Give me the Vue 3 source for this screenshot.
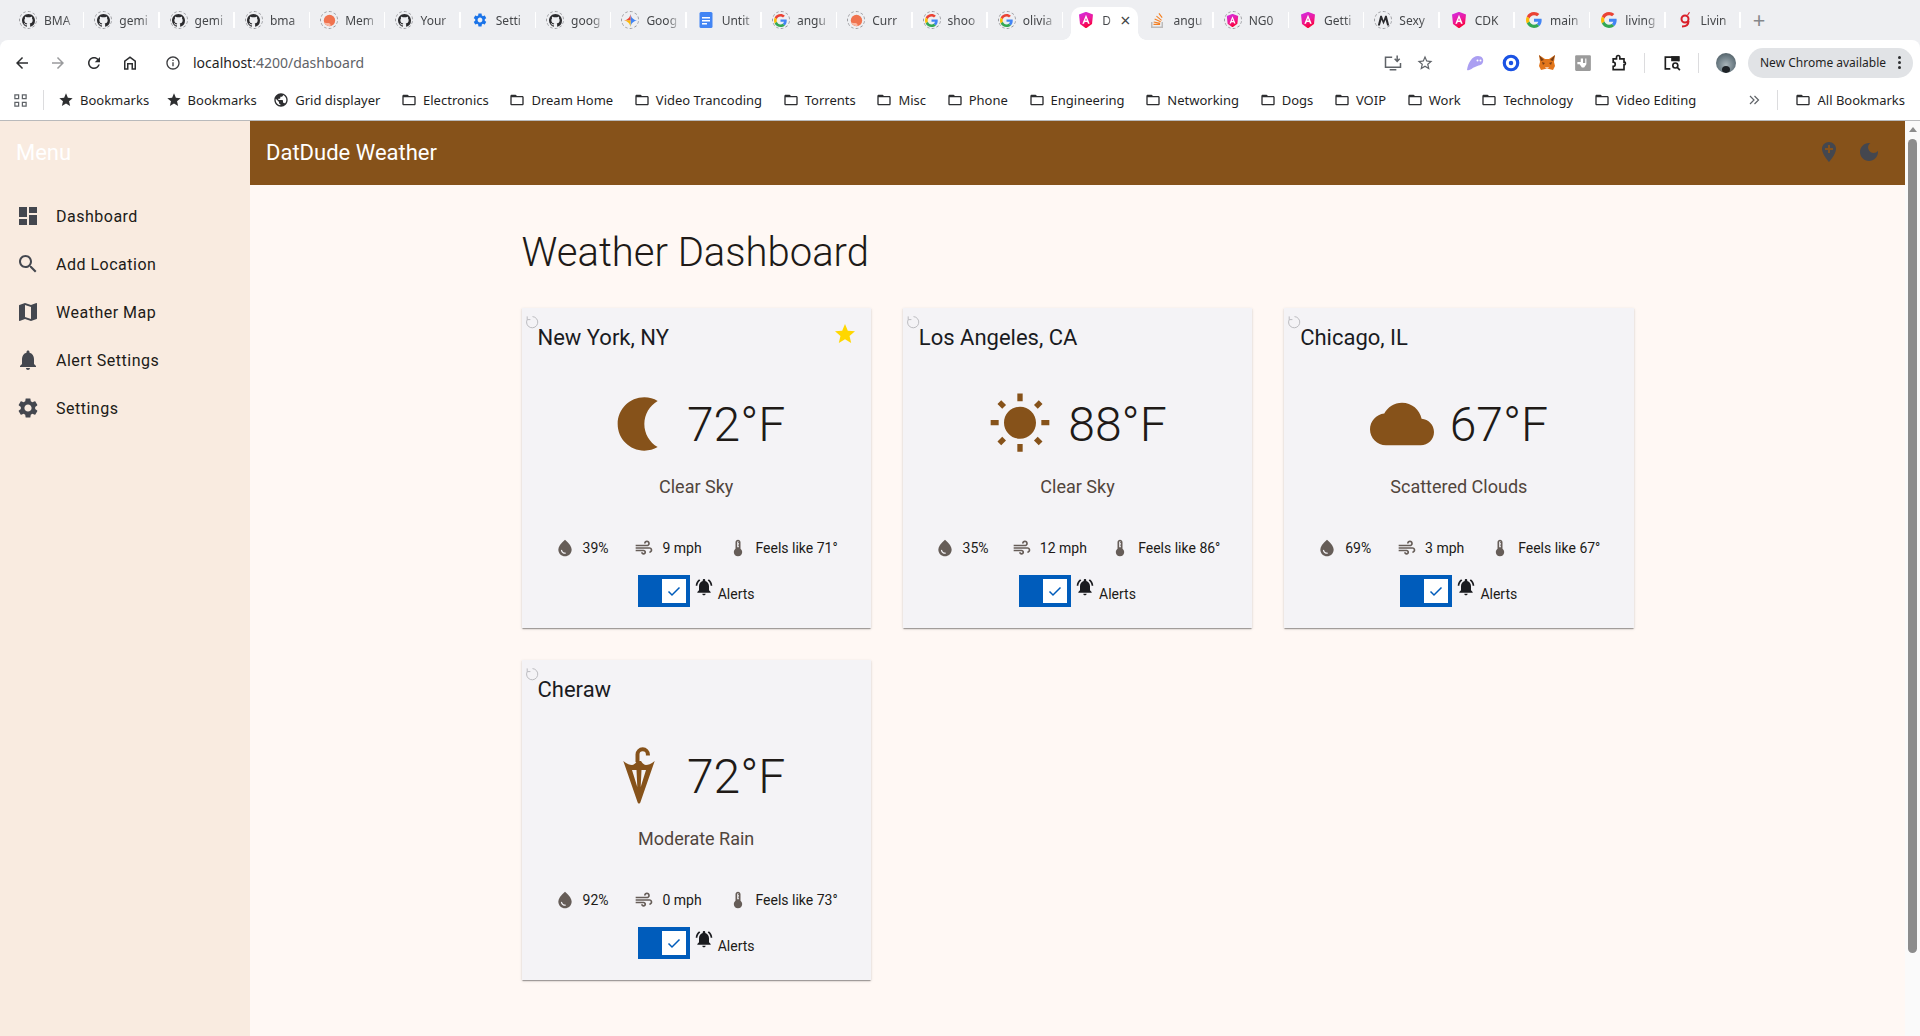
<script setup>
const icons = {
  dashboard: 'M3 13h8V3H3v10zm0 8h8v-6H3v6zm10 0h8V11h-8v10zm0-18v6h8V3h-8z',
  search: 'M15.5 14h-.79l-.28-.27C15.41 12.59 16 11.11 16 9.5 16 5.91 13.09 3 9.5 3S3 5.91 3 9.5 5.91 16 9.5 16c1.61 0 3.09-.59 4.23-1.57l.27.28v.79l5 4.99L20.49 19l-4.99-5zm-6 0C7.01 14 5 11.99 5 9.5S7.01 5 9.5 5 14 7.01 14 9.5 11.99 14 9.5 14z',
  map: 'M20.5 3l-.16.03L15 5.1 9 3 3.36 4.9c-.21.07-.36.25-.36.48V20.5c0 .28.22.5.5.5l.16-.03L9 18.9l6 2.1 5.64-1.9c.21-.07.36-.25.36-.48V3.5c0-.28-.22-.5-.5-.5zM15 19l-6-2.11V5l6 2.11V19z',
  bell: 'M12 22c1.1 0 2-.9 2-2h-4c0 1.1.89 2 2 2zm6-6v-5c0-3.07-1.64-5.64-4.5-6.32V4c0-.83-.67-1.5-1.5-1.5s-1.5.67-1.5 1.5v.68C7.63 5.36 6 7.92 6 11v5l-2 2v1h16v-1l-2-2z',
  settings: 'M19.14 12.94c.04-.3.06-.61.06-.94 0-.32-.02-.64-.07-.94l2.03-1.58c.18-.14.23-.41.12-.61l-1.92-3.32c-.12-.22-.37-.29-.59-.22l-2.39.96c-.5-.38-1.03-.7-1.62-.94l-.36-2.54c-.04-.24-.24-.41-.48-.41h-3.84c-.24 0-.43.17-.47.41l-.36 2.54c-.59.24-1.13.57-1.62.94l-2.39-.96c-.22-.08-.47 0-.59.22L2.74 8.87c-.12.21-.08.47.12.61l2.03 1.58c-.05.3-.09.63-.09.94s.02.64.07.94l-2.03 1.58c-.18.14-.23.41-.12.61l1.92 3.32c.12.22.37.29.59.22l2.39-.96c.5.38 1.03.7 1.62.94l.36 2.54c.05.24.24.41.48.41h3.84c.24 0 .44-.17.47-.41l.36-2.54c.59-.24 1.13-.56 1.62-.94l2.39.96c.22.08.47 0 .59-.22l1.92-3.32c.12-.22.07-.47-.12-.61l-2.01-1.58zM12 15.6c-1.98 0-3.6-1.62-3.6-3.6s1.62-3.6 3.6-3.6 3.6 1.62 3.6 3.6-1.62 3.6-3.6 3.6z',
  addLocation: 'M12 2C8.14 2 5 5.14 5 9c0 5.25 7 13 7 13s7-7.75 7-13c0-3.86-3.14-7-7-7zm4 8h-3v3h-2v-3H8V8h3V5h2v3h3v2z',
  darkMode: 'M12 3c-4.97 0-9 4.03-9 9s4.03 9 9 9 9-4.03 9-9c0-.46-.04-.92-.1-1.36-.98 1.37-2.58 2.26-4.4 2.26-2.98 0-5.4-2.42-5.4-5.4 0-1.81.89-3.42 2.26-4.4-.44-.06-.9-.1-1.36-.1z',
  sun: 'M6.76 4.84l-1.8-1.79-1.41 1.41 1.79 1.79 1.42-1.41zM4 10.5H1v2h3v-2zm9-9.95h-2V3.5h2V.55zm7.45 3.91l-1.41-1.41-1.79 1.79 1.41 1.41 1.79-1.79zm-3.21 13.7l1.79 1.8 1.41-1.41-1.8-1.79-1.4 1.4zM20 10.5v2h3v-2h-3zm-8-5c-3.31 0-6 2.69-6 6s2.69 6 6 6 6-2.69 6-6-2.69-6-6-6zm-1 16.95h2V19.5h-2v2.95zm-7.45-3.91l1.41 1.41 1.79-1.8-1.41-1.41-1.79 1.8z',
  cloud: 'M19.35 10.04C18.67 6.59 15.64 4 12 4 9.11 4 6.6 5.64 5.35 8.04 2.34 8.36 0 10.91 0 14c0 3.31 2.69 6 6 6h13c2.76 0 5-2.24 5-5 0-2.64-2.05-4.78-4.65-4.96z',
  moon: 'M14 2c1.82 0 3.53.5 5 1.35C16.01 5.08 14 8.3 14 12s2.01 6.92 5 8.65C17.53 21.5 15.82 22 14 22 8.48 22 4 17.52 4 12S8.48 2 14 2z',
  drop: 'M12 2c-5.33 4.55-8 8.48-8 11.8 0 4.98 3.8 8.2 8 8.2s8-3.22 8-8.2c0-3.32-2.67-7.25-8-11.8zM7.83 14c.37 0 .67.26.74.62.41 2.22 2.28 2.98 3.64 2.87.43-.02.79.32.79.75 0 .4-.32.73-.72.75-2.13.13-4.62-1.09-5.19-4.12-.08-.45.28-.87.74-.87z',
  air: 'M14.5 17c0 1.65-1.35 3-3 3s-3-1.35-3-3h2c0 .55.45 1 1 1s1-.45 1-1-.45-1-1-1H2v-2h9.5c1.65 0 3 1.35 3 3zM19 6.5C19 4.57 17.43 3 15.5 3S12 4.57 12 6.5h2c0-.83.67-1.5 1.5-1.5s1.5.67 1.5 1.5S16.33 8 15.5 8H2v2h13.5c1.93 0 3.5-1.57 3.5-3.5zm-.5 4.5H2v2h16.5c.83 0 1.5.67 1.5 1.5s-.67 1.5-1.5 1.5v2c1.93 0 3.5-1.57 3.5-3.5S20.43 11 18.5 11z',
  thermo: 'M15 13V5c0-1.66-1.34-3-3-3S9 3.34 9 5v8c-1.21.91-2 2.37-2 4 0 2.76 2.24 5 5 5s5-2.24 5-5c0-1.63-.79-3.09-2-4zm-4-8c0-.55.45-1 1-1s1 .45 1 1h-1v1h1v2h-1v1h1v2h-2V5z',
  bellActive: 'M7.58 4.08 6.15 2.65C3.75 4.48 2.17 7.3 2.03 10.5h2c.15-2.65 1.51-4.97 3.55-6.42zm12.39 6.42h2c-.15-3.2-1.73-6.02-4.12-7.85l-1.42 1.43c2.02 1.45 3.39 3.77 3.54 6.42zM18 11c0-3.07-1.64-5.64-4.5-6.32V4c0-.83-.67-1.5-1.5-1.5s-1.5.67-1.5 1.5v.68C7.63 5.36 6 7.92 6 11v5l-2 2v1h16v-1l-2-2v-5zm-6 11c.14 0 .27-.01.4-.04.65-.14 1.18-.58 1.44-1.18.1-.24.15-.5.15-.78h-4c.01 1.1.9 2 2.01 2z',
  star: 'M12 17.27 18.18 21l-1.64-7.03L22 9.24l-7.19-.61L12 2 9.19 8.63 2 9.24l5.46 4.73L5.82 21z',
  starOutline: 'M22 9.24l-7.19-.62L12 2 9.19 8.63 2 9.24l5.46 4.73L5.82 21 12 17.27 18.18 21l-1.63-7.03L22 9.24zM12 15.4l-3.76 2.27 1-4.28-3.32-2.88 4.38-.38L12 6.1l1.71 4.04 4.38.38-3.32 2.88 1 4.28L12 15.4z',
  globe: 'M12 2C6.48 2 2 6.48 2 12s4.48 10 10 10 10-4.48 10-10S17.52 2 12 2zm-1 17.93c-3.95-.49-7-3.85-7-7.93 0-.62.08-1.21.21-1.79L9 15v1c0 1.1.9 2 2 2v1.93zm6.9-2.54c-.26-.81-1-1.39-1.9-1.39h-1v-3c0-.55-.45-1-1-1H8v-2h2c.55 0 1-.45 1-1V7h2c1.1 0 2-.9 2-2v-.41c2.93 1.19 5 4.06 5 7.41 0 2.08-.8 3.97-2.1 5.39z',
  folder: 'M20 6h-8l-2-2H4c-1.1 0-1.99.9-1.99 2L2 18c0 1.1.9 2 2 2h16c1.1 0 2-.9 2-2V8c0-1.1-.9-2-2-2zm0 12H4V8h16v10z',
  github: 'M8 0C3.58 0 0 3.58 0 8c0 3.54 2.29 6.53 5.47 7.59.4.07.55-.17.55-.38 0-.19-.01-.82-.01-1.49-2.01.37-2.53-.49-2.69-.94-.09-.23-.48-.94-.82-1.13-.28-.15-.68-.52-.01-.53.63-.01 1.08.58 1.23.82.72 1.21 1.87.87 2.33.66.07-.52.28-.87.51-1.07-1.78-.2-3.64-.89-3.64-3.95 0-.87.31-1.59.82-2.15-.08-.2-.36-1.02.08-2.12 0 0 .67-.21 2.2.82.64-.18 1.32-.27 2-.27s1.36.09 2 .27c1.53-1.04 2.2-.82 2.2-.82.44 1.1.16 1.92.08 2.12.51.56.82 1.27.82 2.15 0 3.07-1.87 3.75-3.65 3.95.29.25.54.73.54 1.48 0 1.07-.01 1.93-.01 2.2 0 .21.15.46.55.38A8.013 8.013 0 0016 8c0-4.42-3.58-8-8-8z',
  back: 'M20 11H7.83l5.59-5.59L12 4l-8 8 8 8 1.41-1.41L7.83 13H20v-2z',
  forward: 'M12 4l-1.41 1.41L16.17 11H4v2h12.17l-5.58 5.59L12 20l8-8z',
  reload: 'M17.65 6.35C16.2 4.9 14.21 4 12 4c-4.42 0-7.99 3.58-7.99 8s3.57 8 7.99 8c3.73 0 6.84-2.55 7.73-6h-2.08c-.82 2.33-3.04 4-5.65 4-3.31 0-6-2.69-6-6s2.69-6 6-6c1.66 0 3.14.69 4.22 1.78L13 11h7V4l-2.35 2.35z',
  home: 'M12 3 4 9v12h6v-7h4v7h6V9l-8-6zm6 16h-2v-7H8v7H6V10l6-4.5 6 4.5v9z',
  info: 'M11 7h2v2h-2zm0 4h2v6h-2zm1-9C6.48 2 2 6.48 2 12s4.48 10 10 10 10-4.48 10-10S17.52 2 12 2zm0 18c-4.41 0-8-3.59-8-8s3.59-8 8-8 8 3.59 8 8-3.59 8-8 8z'
}

const googPaths = [
  ['#EA4335', 'M24 9.5c3.54 0 6.71 1.22 9.21 3.6l6.85-6.85C35.9 2.38 30.47 0 24 0 14.62 0 6.51 5.38 2.56 13.22l7.98 6.19C12.43 13.72 17.74 9.5 24 9.5z'],
  ['#4285F4', 'M46.98 24.55c0-1.57-.15-3.09-.38-4.55H24v9.02h12.94c-.58 2.96-2.26 5.48-4.78 7.18l7.73 6c4.51-4.18 7.09-10.36 7.09-17.65z'],
  ['#FBBC05', 'M10.53 28.59c-.48-1.45-.76-2.99-.76-4.59s.27-3.14.76-4.59l-7.98-6.19C.92 16.46 0 20.12 0 24c0 3.88.92 7.54 2.56 10.78l7.97-6.19z'],
  ['#34A853', 'M24 48c6.48 0 11.93-2.13 16.09-5.81l-7.73-6c-2.15 1.45-4.92 2.3-8.36 2.3-6.26 0-11.57-4.22-13.47-9.91l-7.98 6.19C6.51 42.62 14.62 48 24 48z']
]

const tabs = [
  { icon: 'github', ring: true, title: 'BMA' },
  { icon: 'github', ring: true, title: 'gemi' },
  { icon: 'github', ring: true, title: 'gemi' },
  { icon: 'github', ring: true, title: 'bma' },
  { icon: 'orange', ring: true, title: 'Mem' },
  { icon: 'github', ring: true, title: 'Your' },
  { icon: 'gear', title: 'Setti' },
  { icon: 'github', ring: true, title: 'goog' },
  { icon: 'gemini', ring: true, title: 'Goog' },
  { icon: 'docs', title: 'Untit' },
  { icon: 'goog', ring: true, title: 'angu' },
  { icon: 'orange', ring: true, title: 'Curr' },
  { icon: 'goog', ring: true, title: 'shoo' },
  { icon: 'goog', ring: true, title: 'olivia' },
  { icon: 'angular', title: 'D', active: true },
  { icon: 'so', title: 'angu' },
  { icon: 'angular', ring: true, title: 'NG0' },
  { icon: 'angular', title: 'Getti' },
  { icon: 'moz', ring: true, title: 'Sexy' },
  { icon: 'angular', title: 'CDK' },
  { icon: 'goog', title: 'main' },
  { icon: 'goog', title: 'living' },
  { icon: 'living', title: 'Livin' }
]

const bookmarks = [
  { icon: 'star', label: 'Bookmarks' },
  { icon: 'star', label: 'Bookmarks' },
  { icon: 'globe', label: 'Grid displayer' },
  { icon: 'folder', label: 'Electronics' },
  { icon: 'folder', label: 'Dream Home' },
  { icon: 'folder', label: 'Video Trancoding' },
  { icon: 'folder', label: 'Torrents' },
  { icon: 'folder', label: 'Misc' },
  { icon: 'folder', label: 'Phone' },
  { icon: 'folder', label: 'Engineering' },
  { icon: 'folder', label: 'Networking' },
  { icon: 'folder', label: 'Dogs' },
  { icon: 'folder', label: 'VOIP' },
  { icon: 'folder', label: 'Work' },
  { icon: 'folder', label: 'Technology' },
  { icon: 'folder', label: 'Video Editing' }
]

const navItems = [
  { icon: 'dashboard', label: 'Dashboard' },
  { icon: 'search', label: 'Add Location' },
  { icon: 'map', label: 'Weather Map' },
  { icon: 'bell', label: 'Alert Settings' },
  { icon: 'settings', label: 'Settings' }
]

const cities = [
  { name: 'New York, NY', icon: 'moon', temp: '72°F', condition: 'Clear Sky', humidity: '39%', wind: '9 mph', feels: 'Feels like 71°', favorite: true },
  { name: 'Los Angeles, CA', icon: 'sun', temp: '88°F', condition: 'Clear Sky', humidity: '35%', wind: '12 mph', feels: 'Feels like 86°' },
  { name: 'Chicago, IL', icon: 'cloud', temp: '67°F', condition: 'Scattered Clouds', humidity: '69%', wind: '3 mph', feels: 'Feels like 67°' },
  { name: 'Cheraw', icon: 'umbrella', temp: '72°F', condition: 'Moderate Rain', humidity: '92%', wind: '0 mph', feels: 'Feels like 73°' }
]
</script>

<template>
  <div class="browser">
    <div class="tabstrip">
      <div v-for="(tab, i) in tabs" :key="i" class="tab" :class="{ active: tab.active }">
        <span class="favicon" :class="{ ring: tab.ring }">
          <svg v-if="tab.icon === 'github'" viewBox="0 0 16 16" class="fav-inner"><path fill="#2b2b2e" :d="icons.github" /></svg>
          <svg v-else-if="tab.icon === 'goog'" viewBox="0 0 48 48" class="fav-inner"><path v-for="p in googPaths" :key="p[0]" :fill="p[0]" :d="p[1]" /></svg>
          <svg v-else-if="tab.icon === 'orange'" viewBox="0 0 16 16" class="fav-inner"><circle cx="8" cy="8" r="7" fill="#f0734f" /><path fill="#f9b9a5" d="M1 10c2 3 5 5 8 5 1-2 0-3-2-4-2 0-4 0-6-1z" /></svg>
          <svg v-else-if="tab.icon === 'gear'" viewBox="0 0 24 24" class="fav-inner"><path fill="#1a73e8" :d="icons.settings" /></svg>
          <svg v-else-if="tab.icon === 'gemini'" viewBox="0 0 16 16" class="fav-inner"><path fill="#4285f4" d="M8 0c.5 4 3.500 7.500 8 8-4.500.5-7.500 4-8 8z" /><path fill="#ea4335" d="M8 0C7.500 4 4.500 7.500 0 8h8z" /><path fill="#fbbc05" d="M0 8c4.500.5 7.500 4 8 8V8z" /></svg>
          <svg v-else-if="tab.icon === 'docs'" viewBox="0 0 16 16"><rect x="1.500" width="13" height="16" rx="1.500" fill="#4285f4" /><path fill="#fff" d="M4 5h8v1.500H4zm0 3h8v1.500H4zm0 3h5v1.500H4z" /></svg>
          <svg v-else-if="tab.icon === 'angular'" viewBox="0 0 16 16" class="fav-inner">
            <defs>
              <linearGradient :id="'ng' + i" x1="0" y1="0" x2=".4" y2="1">
                <stop offset="0" stop-color="#d02ce8" />
                <stop offset=".6" stop-color="#ee1a9a" />
                <stop offset="1" stop-color="#f8003c" />
              </linearGradient>
            </defs>
            <path :fill="'url(#ng' + i + ')'" d="M8.500 0 15 2.500l-1 9.500-5.500 4-1 0L2 12 1 2.500 7.500 0z" />
            <path fill="#fff" d="M8 2.800 4.300 11.800h1.700l.7-1.800h2.600l.7 1.800h1.700zm-.9 5.800.9-2.300.9 2.300z" />
          </svg>
          <svg v-else-if="tab.icon === 'so'" viewBox="0 0 16 16"><path fill="#bcbbbb" d="M2 10h1.500v4.500h9V10H14v6H2z" /><path fill="#f48024" d="M4.500 10.500l6.500 1.400.3-1.100-6.500-1.400zm.9-3 6 2.800.5-1-6-2.800zm1.700-3 5.100 4.200.7-.8L7.800 3.700zM10.400 1 9.500 1.700l3.200 4.200.9-.7zM4.500 13h6.600v-1.200H4.500z" /></svg>
          <svg v-else-if="tab.icon === 'moz'" viewBox="0 0 16 16" class="fav-inner"><path fill="#2b2b2e" d="M1 14 4 2h2l2 6 2-6h2l3 12h-2.500L10.500 7 8 13 5.500 7 3.500 14z" /></svg>
          <svg v-else viewBox="0 0 16 16"><path fill="none" stroke="#d9202a" stroke-width="2" d="M8 3.500a3.500 3.500 0 1 0 0 7 3.500 3.500 0 0 0 0-7zM11.500 9c0 3.500-2 5.500-6.500 5.500" /><path fill="#d9202a" d="M10 3l2-3 1 .5-2 3z" /></svg>
        </span>
        <span class="tab-title">{{ tab.title }}</span>
        <span v-if="tab.active" class="tab-close">×</span>
      </div>
      <span class="new-tab">+</span>
    </div>

    <div class="toolbar">
      <button class="tool"><svg viewBox="0 0 24 24"><path :d="icons.back" /></svg></button>
      <button class="tool dim"><svg viewBox="0 0 24 24"><path :d="icons.forward" /></svg></button>
      <button class="tool"><svg viewBox="0 0 24 24"><path :d="icons.reload" /></svg></button>
      <button class="tool"><svg viewBox="0 0 24 24"><path :d="icons.home" /></svg></button>
      <svg class="site-info" viewBox="0 0 24 24"><path :d="icons.info" /></svg>
      <div class="url">localhost<span class="url-rest">:4200/dashboard</span></div>

      <button class="tool narrow install">
        <svg class="line" viewBox="0 0 24 24" stroke="#5f6368" stroke-width="1.800"><path d="M11 5H3v12h18v-5M8 20h8M17 3v7m-3-3 3 3 3-3" /></svg>
      </button>
      <button class="tool narrow star-btn"><svg viewBox="0 0 24 24" class="grey"><path :d="icons.starOutline" /></svg></button>
      <button class="tool ext-first">
        <svg viewBox="1 1 18 18"><path fill="#ab9ff2" d="M2 17C3 10 7 3 13 3c4 0 6 3 5 6-1 4-5 3-8 5-3 1-5 4-8 3z" /><circle cx="12.500" cy="7.500" r="1" fill="#fff" /><circle cx="15.500" cy="7.500" r="1" fill="#fff" /></svg>
      </button>
      <button class="tool">
        <svg viewBox="0 0 20 20"><circle cx="10" cy="10" r="7.500" fill="none" stroke="#1b53e4" stroke-width="3.500" /><circle cx="10" cy="10" r="2.500" fill="#1b53e4" /></svg>
      </button>
      <button class="tool">
        <svg viewBox="1 1 18 18"><path fill="#e2761b" d="M2 2l6 4h4l6-4-1 7 1 4-2 4-4-1H8l-4 1-2-4 1-4z" /><path fill="#763d16" d="M5 9l3 1-2 2zM15 9l-3 1 2 2zM2 2l5 5-3 1zM18 2l-5 5 3 1z" /><path fill="#f6c4a0" d="M8 14h4l-1 2H9z" /></svg>
      </button>
      <button class="tool">
        <svg viewBox="2 2 16 16"><rect x="3" y="3" width="14" height="14" rx="1" fill="#9b9b9b" /><path fill="#fff" d="M8 6h2v4h2V6h1v5l-2 3H9L7 11H5V9h3z" /></svg>
      </button>
      <button class="tool">
        <svg class="line" viewBox="0 0 24 24" stroke="#1f1f1f" stroke-width="2"><path d="M5 7h4V5a2 2 0 0 1 4 0v2h5v4h1a2 2 0 0 1 0 3h-1v6H5v-4a2 2 0 0 0 0-5z" /></svg>
      </button>
      <span class="tool-sep first"></span>
      <button class="tool">
        <svg class="line" viewBox="0 0 24 24" stroke="#1f1f1f" stroke-width="2"><path d="M10 19H4V5h16v5" /><path fill="#1f1f1f" d="M12 5h8v4h-8z" /><circle cx="16" cy="15" r="3" /><path d="M18 17l3.500 3.500" /></svg>
      </button>
      <span class="tool-sep"></span>
      <button class="tool">
        <span class="avatar"><span class="avatar-face"></span></span>
      </button>
      <div class="update-pill">
        <span>New Chrome available</span>
        <span class="pill-dots"><i></i><i></i><i></i></span>
      </div>
    </div>

    <div class="bookmarks">
      <svg class="apps" viewBox="0 0 16 16" fill="none" stroke="#5f6368" stroke-width="1.300"><path d="M2 2h4v4H2zM10 2h4v4h-4zM2 10h4v4H2zM10 10h4v4h-4z" /></svg>
      <span class="bm-sep"></span>
      <div v-for="(b, i) in bookmarks" :key="i" class="bm" :class="{ tight: b.icon === 'star' }">
        <svg viewBox="0 0 24 24"><path :d="icons[b.icon]" /></svg>
        <span>{{ b.label }}</span>
      </div>
      <svg class="bm-more" viewBox="0 0 12 12" fill="none" stroke="#5f6368" stroke-width="1.200"><path d="M2 2l4 4-4 4M6.500 2l4 4-4 4" /></svg>
      <span class="bm-sep last"></span>
      <div class="bm">
        <svg viewBox="0 0 24 24"><path :d="icons.folder" /></svg>
        <span>All Bookmarks</span>
      </div>
    </div>

    <div class="page">
      <aside class="sidenav">
        <div class="menu-title">Menu</div>
        <ul class="nav-list">
          <li v-for="item in navItems" :key="item.label" class="nav-item">
            <svg viewBox="0 0 24 24"><path :d="icons[item.icon]" /></svg>
            <span>{{ item.label }}</span>
          </li>
        </ul>
      </aside>

      <div class="main">
        <header class="app-bar">
          <span class="app-title">DatDude Weather</span>
          <svg viewBox="0 0 24 24" class="bar-icon"><path :d="icons.addLocation" /></svg>
          <svg viewBox="0 0 24 24" class="bar-icon"><path :d="icons.darkMode" /></svg>
        </header>

        <main class="content">
          <h1 class="heading">Weather Dashboard</h1>
          <div class="grid">
            <section v-for="city in cities" :key="city.name" class="card">
              <svg class="refresh" viewBox="0 0 14 14" fill="none" stroke="#bcbcc0" stroke-width="1"><path d="M7.500 1.600a5.600 5.600 0 1 1-5.300 3" /><path d="M2.200 1.400v3.200h3.200" /></svg>
              <svg v-if="city.favorite" class="fav-star" viewBox="0 0 24 24"><path :d="icons.star" /></svg>
              <h2 class="city">{{ city.name }}</h2>
              <div class="temp-row">
                <svg v-if="city.icon === 'umbrella'" class="weather-icon" viewBox="0 0 64 64">
                  <path fill="#86521a" fill-rule="evenodd" d="M16.300 17c3 2.500 6 4 8.700 4 2.200 0 3.500-2 5-4h4c1.500 2 2.800 4 5 4 2.700 0 5.700-1.500 8.700-4L33.500 58c-.7 2-2.300 2-3 0zM25 26l5.300 17-.8-17zm14 0h-4.500l-.8 17z" />
                  <path fill="none" stroke="#86521a" stroke-width="4" d="M30.500 18v-7.500a5.200 5.200 0 0 1 10.400 0v1" />
                </svg>
                <svg v-else class="weather-icon" viewBox="0 0 24 24"><path :d="icons[city.icon]" /></svg>
                <span class="temp">{{ city.temp }}</span>
              </div>
              <div class="condition">{{ city.condition }}</div>
              <div class="details">
                <span class="detail"><svg viewBox="0 0 24 24"><path :d="icons.drop" /></svg>{{ city.humidity }}</span>
                <span class="detail"><svg viewBox="0 0 24 24"><path :d="icons.air" /></svg>{{ city.wind }}</span>
                <span class="detail"><svg viewBox="0 0 24 24"><path :d="icons.thermo" /></svg>{{ city.feels }}</span>
              </div>
              <div class="alerts">
                <span class="toggle">
                  <span class="thumb">
                    <svg viewBox="0 0 16 16" fill="none" stroke="#005cbb" stroke-width="1.500"><path d="M2.500 8.500l3.500 3.500 7.500-7.500" /></svg>
                  </span>
                </span>
                <svg class="alert-bell" viewBox="0 0 24 24"><path :d="icons.bellActive" /></svg>
                <span class="alert-label">Alerts</span>
              </div>
            </section>
          </div>
        </main>
      </div>

      <div class="scrollbar">
        <span class="scroll-up"></span>
        <span class="scroll-thumb"></span>
      </div>
    </div>
  </div>
</template>

<style scoped>
.browser {
  width: 1920px;
  height: 1036px;
  display: flex;
  flex-direction: column;
  overflow: hidden;
  background: #fff;
  font-family: "Noto Sans", sans-serif;
}

.tabstrip {
  height: 40px;
  flex: none;
  display: flex;
  padding: 7px 0 0 9px;
  box-sizing: border-box;
  background: #eeeff2;
}

.tab {
  position: relative;
  width: 75.3px;
  flex: none;
  height: 26px;
  display: flex;
  align-items: center;
  padding: 0 8px 0 11px;
  box-sizing: border-box;
  gap: 8px;
  font-size: 12px;
  color: #45474a;
}

.tab::after {
  content: "";
  position: absolute;
  right: 0;
  top: 5px;
  width: 1.500px;
  height: 16px;
  background: #fff;
}

.tab.active {
  height: 33px;
  width: 67.3px;
  margin-left: 8px;
  padding: 0 8px 7px 7px;
  border-radius: 10px 10px 0 0;
  background: #fff;
}

.tab.active::before,
.tab.active::after {
  content: "";
  position: absolute;
  top: auto;
  bottom: 0;
  width: 8px;
  height: 8px;
  background: radial-gradient(circle at 0 0, #eeeff2 7.500px, #fff 8px);
}

.tab.active::before {
  left: -8px;
}

.tab.active::after {
  right: -8px;
  background: radial-gradient(circle at 100% 0, #eeeff2 7.500px, #fff 8px);
}

.tab-title {
  flex: 1;
  min-width: 0;
  overflow: hidden;
  white-space: nowrap;
  -webkit-mask-image: linear-gradient(to right, #000 65%, transparent 105%);
  mask-image: linear-gradient(to right, #000 65%, transparent 105%);
}

.tab-close {
  font-size: 18px;
  line-height: 18px;
  color: #45474a;
}

.favicon {
  width: 16px;
  height: 16px;
  flex: none;
  display: flex;
  align-items: center;
  justify-content: center;
  border-radius: 50%;
}

.favicon svg {
  width: 16px;
  height: 16px;
  display: block;
}

.favicon.ring {
  outline: 1.500px dashed #98999d;
  outline-offset: 0;
}

.favicon.ring .fav-inner {
  width: 13px;
  height: 13px;
}

.new-tab {
  margin-left: 12px;
  margin-top: -2px;
  font-size: 22px;
  line-height: 28px;
  color: #85878b;
}

.toolbar {
  height: 40px;
  flex: none;
  display: flex;
  align-items: center;
  padding: 5px 0 0 4px;
  box-sizing: border-box;
  background: #fff;
  border-radius: 8px 8px 0 0;
  box-shadow: 0 -8px 0 #eeeff2;
}

.tool {
  width: 36px;
  height: 32px;
  flex: none;
  display: flex;
  align-items: center;
  justify-content: center;
  padding: 0;
  background: none;
  border: 0;
}

.tool svg {
  width: 18px;
  height: 18px;
  fill: #2d2e30;
}

.tool svg.line {
  width: 20px;
  height: 20px;
  fill: none;
}

.tool.dim svg {
  fill: #9a9b9d;
}

.tool.narrow {
  width: 32px;
}

.tool.install {
  margin-left: auto;
}

.tool .grey {
  fill: #5f6368;
}

.tool.ext-first {
  margin-left: 16px;
}

.tool-sep {
  width: 1px;
  height: 20px;
  flex: none;
  margin: 0 9px 0 8px;
  background: #dcdcde;
}

.tool-sep.first {
  margin-left: 7px;
}

.avatar {
  width: 20px;
  height: 20px;
  border-radius: 50%;
  display: flex;
  align-items: flex-end;
  justify-content: center;
  overflow: hidden;
  background: radial-gradient(circle at 50% 60%, #a9b4b9 0, #6b7b83 55%, #3e4a50 100%);
}

.avatar-face {
  width: 8px;
  height: 7px;
  border-radius: 50%;
  background: #1e2226;
}

.site-info {
  width: 16px;
  height: 16px;
  flex: none;
  margin-left: 17px;
  fill: #3b3c3f;
}

.url {
  margin-left: 12px;
  font-size: 14px;
  color: #1f1f1f;
}

.url-rest {
  color: #5f6368;
}

.update-pill {
  width: 165px;
  height: 30px;
  flex: none;
  display: flex;
  align-items: center;
  justify-content: space-between;
  margin: 0 7px 0 4px;
  padding: 0 12px 0 12px;
  box-sizing: border-box;
  border-radius: 15px;
  background: #e1e3e6;
  font-size: 12px;
  color: #1f1f1f;
}

.pill-dots {
  display: flex;
  flex-direction: column;
  gap: 2px;
}

.pill-dots i {
  width: 3px;
  height: 3px;
  border-radius: 50%;
  background: #2d2e30;
}

.bookmarks {
  height: 41px;
  flex: none;
  display: flex;
  align-items: center;
  padding: 0 0 0 13px;
  box-sizing: border-box;
  background: #fff;
  border-bottom: 1px solid #b9babc;
  font-size: 13px;
  color: #1f1f1f;
}

.apps {
  width: 15px;
  height: 15px;
  flex: none;
}

.bm-sep {
  width: 1px;
  height: 20px;
  flex: none;
  margin: 0 14px 0 15px;
  background: #dcdcde;
}

.bm {
  display: flex;
  align-items: center;
  gap: 6px;
  margin-right: 20.7px;
  white-space: nowrap;
}

.bm.tight {
  margin-right: 16.5px;
}

.bm svg {
  width: 16px;
  height: 16px;
  flex: none;
  fill: #2d2e30;
}

.bm-more {
  width: 12px;
  height: 12px;
  flex: none;
  margin-left: auto;
}

.bm-sep.last {
  margin: 0 17px;
}

.bm:last-child {
  margin-right: 15px;
}

.page {
  flex: 1;
  min-height: 0;
  display: flex;
  font-family: Roboto, sans-serif;
}

.sidenav {
  width: 250px;
  flex: none;
  background: #f9ebe0;
}

.menu-title {
  padding: 20px 16px 0;
  font-size: 22px;
  line-height: 24px;
  color: #fff;
}

.nav-list {
  list-style: none;
  margin: 27px 0 0;
  padding: 0;
}

.nav-item {
  height: 48px;
  display: flex;
  align-items: center;
  gap: 16px;
  padding-left: 16px;
  font-size: 16px;
  letter-spacing: .03125em;
  color: #201a17;
}

.nav-item svg {
  width: 24px;
  height: 24px;
  fill: #44474f;
}

.main {
  flex: 1;
  min-width: 0;
  display: flex;
  flex-direction: column;
  background: #fff8f4;
}

.app-bar {
  height: 64px;
  flex: none;
  display: flex;
  align-items: center;
  gap: 16px;
  padding: 0 24px 2px 16px;
  box-sizing: border-box;
  background: #86521a;
}

.app-title {
  margin-right: auto;
  font-size: 22px;
  color: #fff;
}

.bar-icon {
  width: 24px;
  height: 24px;
  fill: #44474f;
}

.content {
  width: 1112px;
  margin: 0 auto;
}

.heading {
  margin: 42px 0 0;
  font-size: 40px;
  line-height: 52px;
  font-weight: 300;
  color: #201a17;
}

.grid {
  display: grid;
  grid-template-columns: repeat(3, 1fr);
  gap: 32px;
  margin-top: 29px;
}

.card {
  position: relative;
  height: 320px;
  display: flex;
  flex-direction: column;
  box-sizing: border-box;
  background: #f4f3f6;
  box-shadow: 0 2px 1px -1px rgba(0, 0, 0, .2), 0 1px 1px rgba(0, 0, 0, .14), 0 1px 3px rgba(0, 0, 0, .12);
}

.refresh {
  position: absolute;
  top: 7px;
  left: 3px;
  width: 14px;
  height: 14px;
}

.fav-star {
  position: absolute;
  top: 14px;
  right: 14px;
  width: 24px;
  height: 24px;
  fill: #ffd700;
}

.city {
  margin: 17px 16px 0;
  font-size: 22px;
  line-height: 26px;
  font-weight: 400;
  color: #1a1b1f;
}

.temp-row {
  display: flex;
  align-items: center;
  justify-content: center;
  gap: 16px;
  height: 64px;
  margin-top: 41px;
}

.weather-icon {
  width: 64px;
  height: 64px;
  flex: none;
  fill: #86521a;
}

.temp {
  font-size: 48px;
  font-weight: 300;
  color: #201a17;
}

.condition {
  margin-top: 19px;
  text-align: center;
  font-size: 18px;
  line-height: 24px;
  color: #51453c;
}

.details {
  display: flex;
  justify-content: space-around;
  width: 309px;
  margin: 37px auto 0;
  font-size: 14px;
  line-height: 24px;
  color: #201a17;
}

.detail {
  display: flex;
  align-items: center;
  gap: 8px;
}

.detail svg {
  width: 20px;
  height: 20px;
  fill: #665d58;
}

.alerts {
  display: flex;
  align-items: center;
  justify-content: center;
  margin-top: 15px;
}

.toggle {
  width: 52px;
  height: 32px;
  flex: none;
  display: flex;
  align-items: center;
  justify-content: flex-end;
  padding-right: 4px;
  box-sizing: border-box;
  background: #005cbb;
}

.thumb {
  width: 24px;
  height: 24px;
  display: flex;
  align-items: center;
  justify-content: center;
  background: #fff;
}

.thumb svg {
  width: 16px;
  height: 16px;
}

.alert-bell {
  width: 20px;
  height: 20px;
  margin: -8px 0 0 4px;
  fill: #1a1b1f;
}

.alert-label {
  margin: 6px 0 0 4px;
  font-size: 14px;
  color: #201a17;
}

.scrollbar {
  width: 15px;
  flex: none;
  display: flex;
  flex-direction: column;
  align-items: center;
  background: #fafafa;
}

.scroll-up {
  width: 0;
  height: 0;
  margin-top: 6px;
  border-left: 4px solid transparent;
  border-right: 4px solid transparent;
  border-bottom: 5px solid #8c8c8c;
}

.scroll-thumb {
  width: 9px;
  height: 814px;
  margin-top: 7px;
  border-radius: 5px;
  background: #8c8c8c;
}
</style>

<style>
html, body {
  margin: 0;
  overflow: hidden;
}
</style>
